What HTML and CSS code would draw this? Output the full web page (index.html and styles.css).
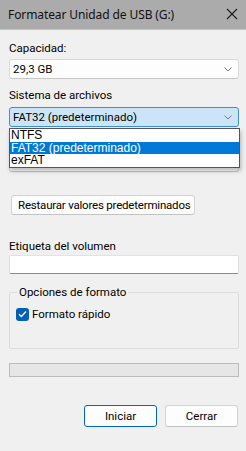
FILE: index.html
```html
<!DOCTYPE html>
<html lang="es">
<head>
<meta charset="utf-8">
<title>Formatear</title>
<link rel="stylesheet" href="styles.css">
</head>
<body>
<div class="win">
  <div class="titlebar">
    <span class="title">Formatear Unidad de USB (G:)</span>
    <svg class="close" width="12" height="12" viewBox="0 0 12 12"><path d="M1 1L11 11M11 1L1 11" stroke="#222" stroke-width="1.2" fill="none"/></svg>
  </div>
  <div class="content">
    <div class="label lbl-cap">Capacidad:</div>
    <div class="combo"><span>29,3 GB</span><svg class="chev" width="8" height="5" viewBox="0 0 8 5"><path d="M0.5 0.5L4 4L7.5 0.5" stroke="#777" fill="none"/></svg></div>

    <div class="label lbl-fs">Sistema de archivos</div>
    <div class="combo-wrap">
      <div class="combo focused"><span>FAT32 (predeterminado)</span><svg class="chev" width="8" height="5" viewBox="0 0 8 5"><path d="M0.5 0.5L4 4L7.5 0.5" stroke="#777" fill="none"/></svg></div>
      <ul class="dropdown">
        <li>NTFS</li>
        <li class="sel">FAT32 (predeterminado)</li>
        <li>exFAT</li>
      </ul>
    </div>

    <div class="label lbl-alloc"></div>
    <div class="combo"></div>

    <button class="btn restore">Restaurar valores predeterminados</button>

    <div class="label lbl-vol">Etiqueta del volumen</div>
    <div class="textbox"></div>

    <fieldset class="group">
      <legend>Opciones de formato</legend>
      <label class="check"><span class="box"><svg width="9" height="8" viewBox="0 0 9 8"><path d="M1 4.2L3.4 6.5L8 1.5" stroke="#fff" stroke-width="1.3" fill="none"/></svg></span>Formato rápido</label>
    </fieldset>

    <div class="progress"></div>

    <div class="actions">
      <button class="btn act default">Iniciar</button>
      <button class="btn act">Cerrar</button>
    </div>
  </div>
</div>
</body>
</html>
```
FILE: styles.css
```css
* { box-sizing: border-box; }
html, body { margin: 0; padding: 0; }
body {
  width: 246px;
  height: 451px;
  background: #f0f0f0;
  font-family: "Roboto", "Noto Sans", sans-serif;
  font-size: 11.5px;
  color: #000;
  overflow: hidden;
}
.win { width: 246px; height: 451px; }
.titlebar {
  height: 30px;
  background: #ababab;
  border-bottom: 1px solid #c4c4c4;
  display: flex;
  align-items: center;
  justify-content: space-between;
  padding: 0 8px 1px 8px;
}
.title { font-family: "Noto Sans", sans-serif; font-size: 12px; color: #111; letter-spacing: -0.1px; }
.content { padding: 0 7px 0 9px; }
.label { height: 16px; line-height: 16px; white-space: nowrap; }
.lbl-cap { margin-top: 10px; }
.lbl-fs { margin-top: 8px; }
.lbl-alloc { margin-top: 6px; }
.lbl-vol { margin-top: 23px; }
.combo {
  height: 20px;
  margin-top: 3px;
  background: #fdfdfd;
  border: 1px solid #dadada;
  border-bottom-color: #c6c6c6;
  border-radius: 3px;
  display: flex;
  align-items: center;
  justify-content: space-between;
  padding: 0 6px 0 3px;
}
.lbl-fs + .combo-wrap { margin-top: 4px; }
.combo-wrap { position: relative; }
.combo-wrap .combo { margin-top: 0; }
.combo.focused { background: #cce4f7; border-color: #3d8fd6; }
.chev { display: block; }
.dropdown {
  position: absolute;
  left: 0;
  top: 21px;
  width: 231px;
  margin: 0;
  padding: 0;
  list-style: none;
  background: #fff;
  border: 1px solid #555;
  box-shadow: 1px 3px 4px rgba(0,0,0,0.25);
  font-family: "Liberation Sans", Arial, sans-serif;
  font-size: 12px;
  z-index: 2;
}
.dropdown li { height: 12.6px; line-height: 13px; padding-left: 1px; }
.dropdown li.sel { background: #0078d7; color: #fff; }
.btn {
  font-family: inherit;
  font-size: 11.5px;
  color: #000;
  background: #fdfdfd;
  border: 1px solid #d3d3d3;
  border-bottom-color: #c2c2c2;
  border-radius: 3px;
  height: 20px;
  padding: 0;
  display: block;
  white-space: nowrap;
}
.restore { margin: 23px 0 0 2px; width: 184px; text-align: left; padding-left: 6px; letter-spacing: -0.2px; }
.textbox {
  margin-top: 1px;
  height: 19px;
  background: #fff;
  border: 1px solid #e2e2e2;
  border-bottom: 1px solid #8a8a8a;
  border-radius: 2px;
}
.group {
  margin: 11px 0 0 0;
  padding: 0 0 0 6px;
  border: 1px solid #dcdcdc;
  border-radius: 2px;
  height: 64px;
}
.group legend { padding: 0 2px; margin-left: 1px; line-height: 14px; }
.check { display: flex; align-items: center; margin-top: 8px; height: 14px; }
.box {
  width: 13px;
  height: 13px;
  background: #005fb8;
  border-radius: 3px;
  display: flex;
  align-items: center;
  justify-content: center;
  margin-right: 3px;
}
.box svg { display: block; }
.progress {
  margin-top: 14px;
  height: 14px;
  background: #e6e6e6;
  border: 1px solid #bcbcbc;
}
.actions {
  display: flex;
  justify-content: flex-end;
  gap: 8px;
  margin-top: 28px;
  padding-right: 1px;
}
.act { width: 73px; height: 22px; text-align: center; }
.act.default { border: 1px solid #0067c0; }
```
